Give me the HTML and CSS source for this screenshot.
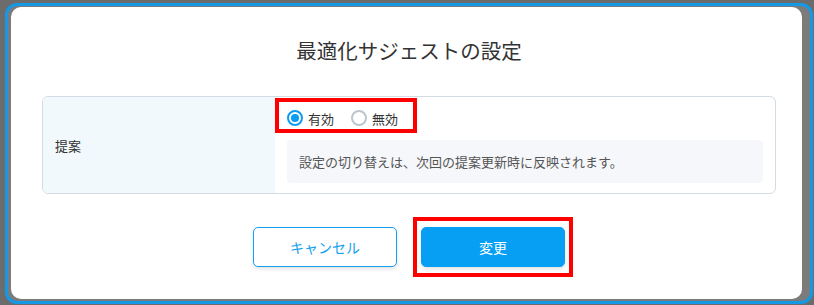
FILE: index.html
```html
<!DOCTYPE html>
<html lang="ja">
<head>
<meta charset="utf-8">
<link rel="stylesheet" href="styles.css">
</head>
<body>
<div class="frame">
  <div class="dialog">
    <h1 class="title">最適化サジェストの設定</h1>
    <div class="table">
      <div class="th">提案</div>
      <div class="td">
        <div class="radios">
          <label class="radio"><span class="dot checked"></span>有効</label>
          <label class="radio"><span class="dot"></span>無効</label>
        </div>
        <div class="info">設定の切り替えは、次回の提案更新時に反映されます。</div>
      </div>
    </div>
    <div class="actions">
      <button class="btn cancel">キャンセル</button>
      <span class="mark-wrap"><button class="btn primary">変更</button></span>
    </div>
  </div>
</div>
</body>
</html>
```
FILE: styles.css
```css
* { box-sizing: border-box; }
html, body { margin: 0; padding: 0; }
body {
  width: 814px;
  height: 305px;
  overflow: hidden;
  background: #6c6c6c;
  font-family: "Noto Sans CJK JP", "Noto Sans", sans-serif;
  color: #333;
}
.frame {
  margin: 3px 1px 0 5px;
  height: 301px;
  border: 3px solid #1598e6;
  border-radius: 12px;
  background: #7b7b7b;
  padding: 1px 8px 2px 3px;
  display: flex;
}
.dialog {
  flex: 1;
  background: #fff;
  border-radius: 10px;
  padding: 29px 26px 0 31px;
}
.title {
  margin: 0;
  font-size: 20.5px;
  line-height: 28px;
  font-weight: 400;
  text-align: center;
  color: #333;
}
.table {
  margin-top: 32px;
  height: 98px;
  border: 1px solid #d3dce5;
  border-radius: 6px;
  display: flex;
  overflow: hidden;
}
.th {
  width: 232px;
  flex: 0 0 232px;
  background: #f2f9fd;
  display: flex;
  align-items: center;
  padding-left: 12px;
  font-size: 13px;
  color: #333;
}
.td {
  flex: 1;
  padding: 10px 12px 12px 12px;
}
.radios {
  position: relative;
  display: inline-flex;
  align-items: center;
  gap: 17px;
  height: 22px;
}
.radios::after {
  content: "";
  position: absolute;
  top: -9px;
  bottom: -4px;
  left: -12px;
  right: -19px;
  border: 4px solid #ff0000;
  pointer-events: none;
}
.radio {
  display: inline-flex;
  align-items: center;
  gap: 5px;
  font-size: 13px;
  color: #333;
}
.dot {
  width: 16px;
  height: 16px;
  border-radius: 50%;
  border: 2px solid #bcc5ce;
  background: #fff;
  position: relative;
}
.dot.checked {
  border-color: #0b9df2;
}
.dot.checked::after {
  content: "";
  position: absolute;
  left: 2px;
  top: 2px;
  width: 8px;
  height: 8px;
  border-radius: 50%;
  background: #0b9df2;
}
.info {
  margin-top: 9px;
  background: #f5f7fa;
  border-radius: 4px;
  padding: 12px 12px;
  font-size: 13px;
  line-height: 19px;
  color: #555;
}
.actions {
  margin-top: 33px;
  display: flex;
  justify-content: center;
  gap: 24px;
}
.btn {
  width: 144px;
  height: 40px;
  border-radius: 5px;
  font-family: inherit;
  font-size: 14px;
  cursor: pointer;
  box-shadow: 0 2px 4px rgba(0,0,0,0.12);
}
.cancel {
  background: #fff;
  border: 1px solid #14a0f0;
  color: #14a0f0;
}
.primary {
  background: #069ff4;
  border: 1px solid #069ff4;
  color: #fff;
}
.mark-wrap {
  position: relative;
  display: inline-flex;
}
.mark-wrap::after {
  content: "";
  position: absolute;
  top: -10px;
  bottom: -10px;
  left: -8px;
  right: -8px;
  border: 4px solid #ff0000;
  pointer-events: none;
}
```
